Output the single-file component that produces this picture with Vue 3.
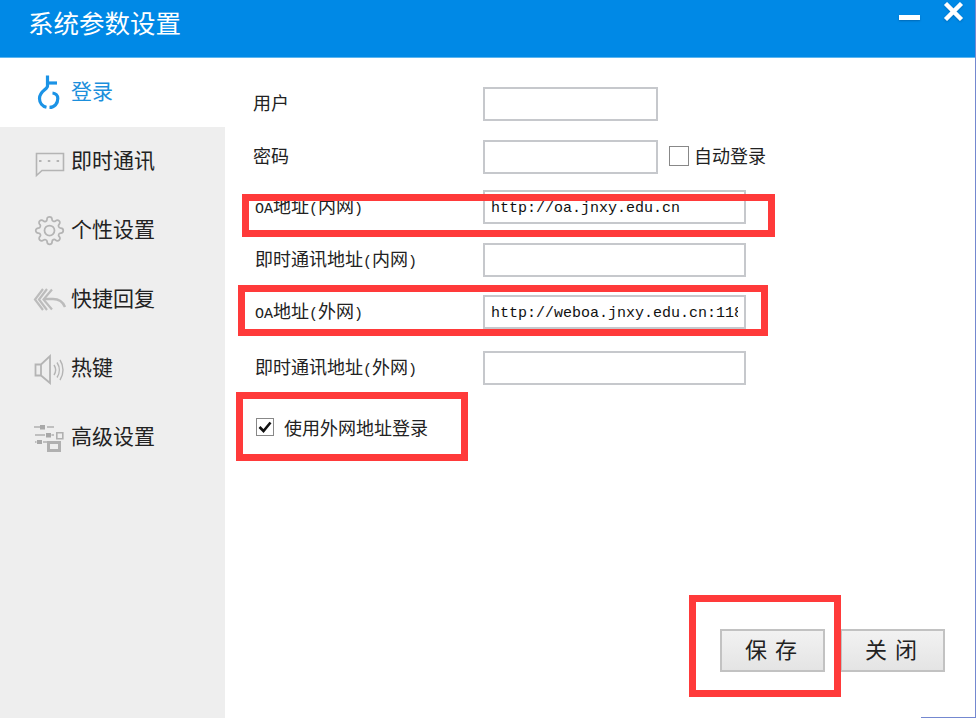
<script setup>
const nav = [
  { key: 'login', label: '登录', active: true },
  { key: 'chat', label: '即时通讯' },
  { key: 'gear', label: '个性设置' },
  { key: 'reply', label: '快捷回复' },
  { key: 'sound', label: '热键' },
  { key: 'adv', label: '高级设置' }
]
const split = (s) =>
  s.split(/([A-Za-z()]+)/).filter(Boolean).map((t) => ({ t, latin: /^[A-Za-z()]+$/.test(t) }))
const rows = [
  { label: '用户', value: '', cls: 'short', off: 'l0' },
  { label: '密码', value: '', cls: 'short', off: 'l0', auto: true },
  { label: 'OA地址(内网)', value: 'http://oa.jnxy.edu.cn', cls: 'long', off: 'l1' },
  { label: '即时通讯地址(内网)', value: '', cls: 'long', off: 'l1' },
  { label: 'OA地址(外网)', value: 'http://weboa.jnxy.edu.cn:118', cls: 'long', off: 'l1' },
  { label: '即时通讯地址(外网)', value: '', cls: 'long', off: 'l1' }
].map((r) => ({ ...r, parts: split(r.label) }))
const marks = [
  { left: 242, top: 194, width: 533, height: 43 },
  { left: 238, top: 285, width: 530, height: 51 },
  { left: 236, top: 392, width: 232, height: 69 },
  { left: 689, top: 595, width: 152, height: 102 }
]
</script>

<template>
  <div class="win">
    <header class="head">
      <h1 class="title">系统参数设置</h1>
      <div class="controls">
        <span class="min"></span>
        <svg class="close" width="22" height="19" viewBox="0 0 22 19">
          <path d="M3.5 1.5 L19.5 17.5 M19.5 1.5 L3.5 17.5" stroke="#fff" stroke-width="4.4" fill="none" />
        </svg>
      </div>
    </header>
    <div class="body">
      <nav class="side">
        <div v-for="n in nav" :key="n.key" class="item" :class="{ active: n.active }">
          <svg class="ico" width="32" height="32" viewBox="0 0 32 32" fill="none" stroke="#b4b4b4" stroke-width="1.6">
            <g v-if="n.key === 'login'" stroke="#1b93e6" stroke-width="3.2">
              <path d="M13.5 -1.5V9C13.5 12.5 5.5 14 5.5 21.5C5.5 26 8.5 29.5 12.5 30.3" />
              <path d="M13.5 6H23" />
              <path d="M15.5 30.4C20.5 30.4 23.8 26.5 23.8 21.5C23.8 18.5 21.5 16.3 18.5 16" />
            </g>
            <g v-else-if="n.key === 'chat'">
              <path d="M2.5 7.5H29.5V24.5H8L2.5 29.5Z" />
              <path d="M5 15H7.5M13.8 15H16.3M22.6 15H25.1" stroke-width="2" />
            </g>
            <g v-else-if="n.key === 'gear'" transform="translate(0.5 0.5) scale(1.25)" stroke-width="1.4">
              <circle cx="12" cy="12" r="4" />
              <path d="M19.4 15a1.65 1.65 0 0 0 .33 1.82l.06.06a2 2 0 0 1 0 2.83 2 2 0 0 1-2.83 0l-.06-.06a1.65 1.65 0 0 0-1.82-.33 1.65 1.65 0 0 0-1 1.51V21a2 2 0 0 1-2 2 2 2 0 0 1-2-2v-.09A1.65 1.65 0 0 0 9 19.4a1.65 1.65 0 0 0-1.82.33l-.06.06a2 2 0 0 1-2.83 0 2 2 0 0 1 0-2.83l.06-.06a1.65 1.65 0 0 0 .33-1.82 1.65 1.65 0 0 0-1.51-1H3a2 2 0 0 1-2-2 2 2 0 0 1 2-2h.09A1.65 1.65 0 0 0 4.6 9a1.65 1.65 0 0 0-.33-1.82l-.06-.06a2 2 0 0 1 0-2.83 2 2 0 0 1 2.83 0l.06.06a1.65 1.65 0 0 0 1.82.33H9a1.65 1.65 0 0 0 1-1.51V3a2 2 0 0 1 2-2 2 2 0 0 1 2 2v.09a1.65 1.65 0 0 0 1 1.51 1.65 1.65 0 0 0 1.82-.33l.06-.06a2 2 0 0 1 2.83 0 2 2 0 0 1 0 2.83l-.06.06a1.65 1.65 0 0 0-.33 1.82V9a1.65 1.65 0 0 0 1.51 1H21a2 2 0 0 1 2 2 2 2 0 0 1-2 2h-.09a1.65 1.65 0 0 0-1.51 1z" />
            </g>
            <g v-else-if="n.key === 'reply'" stroke="#bcbcbc" stroke-width="2.2">
              <path d="M9 5L1 15.5L9 26M13 5L5 15.5L13 26" />
              <path d="M18 5.5L9.5 15.5L18 25.5" />
              <path d="M10 15H19C25 15 29 18 31 23" stroke-width="2.4" />
            </g>
            <g v-else-if="n.key === 'sound'" stroke-width="1.8">
              <path d="M1.5 11.5H7V22.5H1.5ZM7 11.5L16 3V30L7 22.5" />
              <path d="M20 12C22 15 22 19 20 22M23 9.5C26 14 26 20 23 24.5M26 7C30 13 30 21 26 27" stroke-width="1.4" />
            </g>
            <g v-else stroke="#b0b0b0">
              <path d="M0 5H6M13 5H20M1 13H11M17.5 13H20M1 20H2.5M9 20H13" stroke-width="1.5" />
              <path d="M6 3H11V7.5H6ZM12 11H17V15.5H12ZM3 18H8V22H3Z" fill="#a8a8a8" stroke="none" />
              <path d="M22.8 10.8H28.8V16.8H22.8Z" stroke-width="1.6" />
              <path d="M14.5 20.5H25.5V28.5H14.5Z" stroke-width="3" />
            </g>
          </svg>
          <span class="nav-text">{{ n.label }}</span>
        </div>
      </nav>
      <main class="content">
        <form class="form" @submit.prevent>
          <div v-for="r in rows" :key="r.label" class="row">
            <label class="lab" :class="r.off"><span v-for="(p, i) in r.parts" :key="i" :class="{ latin: p.latin }">{{ p.t }}</span></label>
            <input class="field" :class="r.cls" type="text" :value="r.value" readonly />
            <span v-if="r.auto" class="auto">
              <span class="box"></span>
              <span>自动登录</span>
            </span>
          </div>
          <div class="use">
            <span class="tick">
              <svg width="14" height="12" viewBox="0 0 14 12"><path d="M1.5 6L5.5 10L12.5 1.5" fill="none" stroke="#111" stroke-width="2.6" /></svg>
            </span>
            <span>使用外网地址登录</span>
          </div>
        </form>
        <div class="actions">
          <button class="btn" type="button">保 存</button>
          <button class="btn" type="button">关 闭</button>
        </div>
      </main>
    </div>
    <div class="edge"></div>
    <div
      v-for="(m, i) in marks"
      :key="i"
      class="mark"
      :style="{ left: m.left + 'px', top: m.top + 'px', width: m.width + 'px', height: m.height + 'px' }"
    ></div>
  </div>
</template>

<style>
html, body { margin: 0; background: #fff; }
</style>

<style scoped>
.win {
  position: relative;
  width: 976px;
  height: 718px;
  box-sizing: border-box;
  border-right: 1px solid #7488d0;
  display: flex;
  flex-direction: column;
  overflow: hidden;
  font-family: "Noto Sans CJK SC", "Liberation Sans", sans-serif;
  color: #222;
  background: #fff;
}
.head {
  height: 58px;
  flex: none;
  background: #0089e6;
  border-bottom: 1px solid #5cb6f0;
  box-sizing: border-box;
  display: flex;
  align-items: flex-start;
  justify-content: space-between;
  padding: 0 11px 0 28px;
}
.title {
  margin: 4px 0 0;
  font-size: 25.5px;
  line-height: 36px;
  font-weight: 400;
  color: #fff;
}
.controls {
  display: flex;
  align-items: flex-start;
  gap: 22px;
  padding-top: 2px;
}
.min {
  width: 21px;
  height: 5px;
  margin-top: 13px;
  background: #fff;
  box-shadow: 0 1px 2px rgba(0, 60, 110, 0.4);
}
.close { filter: drop-shadow(0 1px 1px rgba(0, 60, 110, 0.35)); }
.body { flex: 1; display: flex; min-height: 0; }
.side { width: 225px; flex: none; background: #eeeeee; }
.item {
  height: 69px;
  display: flex;
  align-items: center;
  gap: 5px;
  padding-left: 34px;
  box-sizing: border-box;
}
.item.active { background: #fff; }
.item.active .nav-text { color: #1b8fdc; }
.ico { flex: none; overflow: visible; }
.nav-text { font-size: 21px; line-height: 30px; color: #222; margin-bottom: 5px; }
.content {
  flex: 1;
  display: flex;
  flex-direction: column;
  padding: 29px 30px 46px 28px;
  min-width: 0;
}
.form {
  display: grid;
  grid-template-rows: 53px 50px 53px 52px 56px 60px auto;
}
.row { display: flex; align-items: flex-start; }
.lab {
  width: 230px;
  flex: none;
  font-size: 18px;
  line-height: 31px;
  box-sizing: border-box;
}
.l1 { padding-left: 2px; }
.latin {
  font-family: "Liberation Mono", monospace;
  font-size: 15px;
}
.field {
  height: 34px;
  box-sizing: border-box;
  border: 2px solid #c6c8cc;
  padding: 2px 6px 0;
  outline: none;
  font-family: "Liberation Mono", monospace;
  font-size: 15px;
  color: #111;
  background: #fff;
}
.short { width: 175px; }
.long { width: 263px; }
.auto {
  display: flex;
  align-items: center;
  gap: 5px;
  margin: 0 0 0 11px;
  font-size: 18px;
  line-height: 30px;
}
.box {
  width: 20px;
  height: 20px;
  margin-top: 2px;
  box-sizing: border-box;
  border: 1.5px solid #888;
}
.use {
  display: flex;
  align-items: center;
  gap: 10px;
  padding-left: 3px;
  font-size: 18px;
  line-height: 30px;
  margin-top: 1px;
}
.tick {
  width: 18px;
  height: 18px;
  box-sizing: border-box;
  border: 1.5px solid #888;
  display: flex;
  align-items: center;
  justify-content: center;
  background: #fff;
}
.actions {
  margin-top: auto;
  display: flex;
  justify-content: flex-end;
  gap: 15px;
}
.btn {
  width: 105px;
  height: 43px;
  box-sizing: border-box;
  border: 2px solid #c2c2c2;
  background: linear-gradient(#f2f2f2, #e4e4e4);
  font-family: inherit;
  font-size: 22px;
  line-height: 30px;
  color: #222;
  padding: 0 3px 6px 0;
  word-spacing: 3px;
}
.edge {
  position: absolute;
  right: 0;
  bottom: 0;
  width: 54px;
  height: 1px;
  background: #7488d0;
}
.mark {
  position: absolute;
  box-sizing: border-box;
  border: 7px solid #ff3a3a;
  pointer-events: none;
}
</style>
